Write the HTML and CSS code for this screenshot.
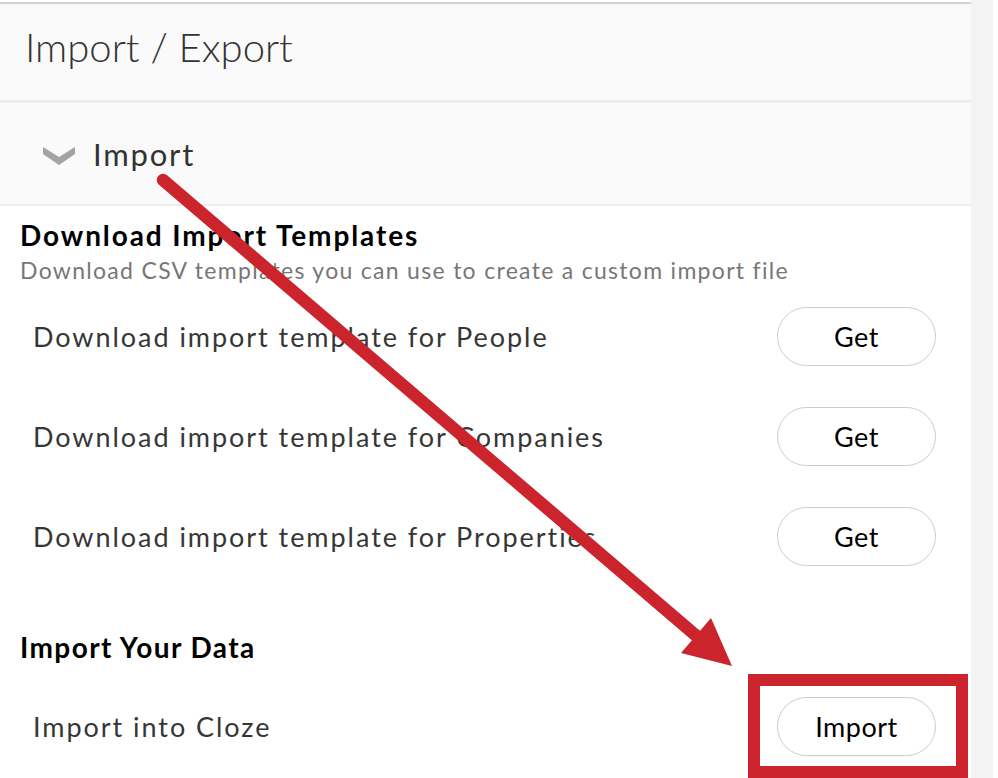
FILE: index.html
```
<!DOCTYPE html>
<html>
<head>
<meta charset="utf-8">
<link rel="stylesheet" href="styles.css">
</head>
<body>
<div class="page">
  <div class="main">
    <div class="title-bar">Import / Export</div>
    <div class="section-head">
      <svg class="chevron" width="32" height="19" viewBox="0 0 32 19"><path d="M0 1 L16 11 L32 1 L32 8 L16 19 L0 8 Z" fill="#a3a3a3"/></svg>
      <span class="section-name">Import</span>
    </div>
    <div class="content">
      <div class="group-title">Download Import Templates</div>
      <div class="group-sub">Download CSV templates you can use to create a custom import file</div>
      <div class="row"><span class="row-label">Download import template for People</span><button class="pill">Get</button></div>
      <div class="row"><span class="row-label">Download import template for Companies</span><button class="pill">Get</button></div>
      <div class="row"><span class="row-label">Download import template for Properties</span><button class="pill">Get</button></div>
      <div class="group-title second">Import Your Data</div>
      <div class="row last"><span class="row-label">Import into Cloze</span><button class="pill">Import</button></div>
    </div>
    <div class="highlight"></div>
    <svg class="arrow" width="971" height="778" viewBox="0 0 971 778">
      <line x1="163" y1="180" x2="700" y2="639" stroke="#cc242c" stroke-width="12.5" stroke-linecap="round"/>
      <polygon points="711,618 732,666 681,653" fill="#cc242c"/>
    </svg>
  </div>
  <div class="scroll"></div>
</div>
</body>
</html>
```
FILE: styles.css
```
html, body { margin: 0; padding: 0; background: #fff; }
body { font-family: Lato, "Open Sans", sans-serif; width: 998px; height: 778px; overflow: hidden; }
.page { display: flex; height: 778px; }
.main { position: relative; width: 971px; padding-top: 2px; }
.scroll { width: 22px; background: #f3f3f3; }
.title-bar { border-top: 2px solid #d2d2d2; border-bottom: 3px solid #ececec; height: 96px; background: #fafafa; padding-left: 25px; font-size: 40px; font-weight: 300; color: #333; line-height: 86px; }
.section-head { height: 103px; box-sizing: border-box; background: #fafafa; border-bottom: 2px solid #ececec; display: flex; align-items: center; padding-left: 43px; }
.chevron { margin-right: 18px; margin-top: 4px; }
.section-name { font-size: 31px; font-weight: 400; color: #333; letter-spacing: 1.8px; }
.content { padding: 12px 0 0 20px; }
.group-title { font-size: 28px; font-weight: 700; color: #000; line-height: 34px; letter-spacing: 1.9px; }
.group-sub { font-size: 23px; color: #777; line-height: 30px; margin-top: 3px; margin-bottom: 1px; letter-spacing: 1.3px; }
.group-title.second { margin-top: 44px; letter-spacing: 1.4px; }
.row { display: flex; align-items: center; justify-content: space-between; height: 100px; padding-left: 13px; padding-right: 35px; }
.row.last { margin-top: 12px; }
.row-label { font-size: 27px; color: #363636; letter-spacing: 1.95px; }
.pill { width: 159px; height: 59px; border: 1.5px solid #cdcdcd; border-radius: 30px; background: #fff; font-family: Lato, sans-serif; font-size: 27px; color: #000; padding: 0; letter-spacing: 0.5px; }
.highlight { position: absolute; left: 748px; top: 674px; width: 220px; height: 104px; box-sizing: border-box; border: 12px solid #cc242c; }
.arrow { position: absolute; left: 0; top: 0; pointer-events: none; }
```
